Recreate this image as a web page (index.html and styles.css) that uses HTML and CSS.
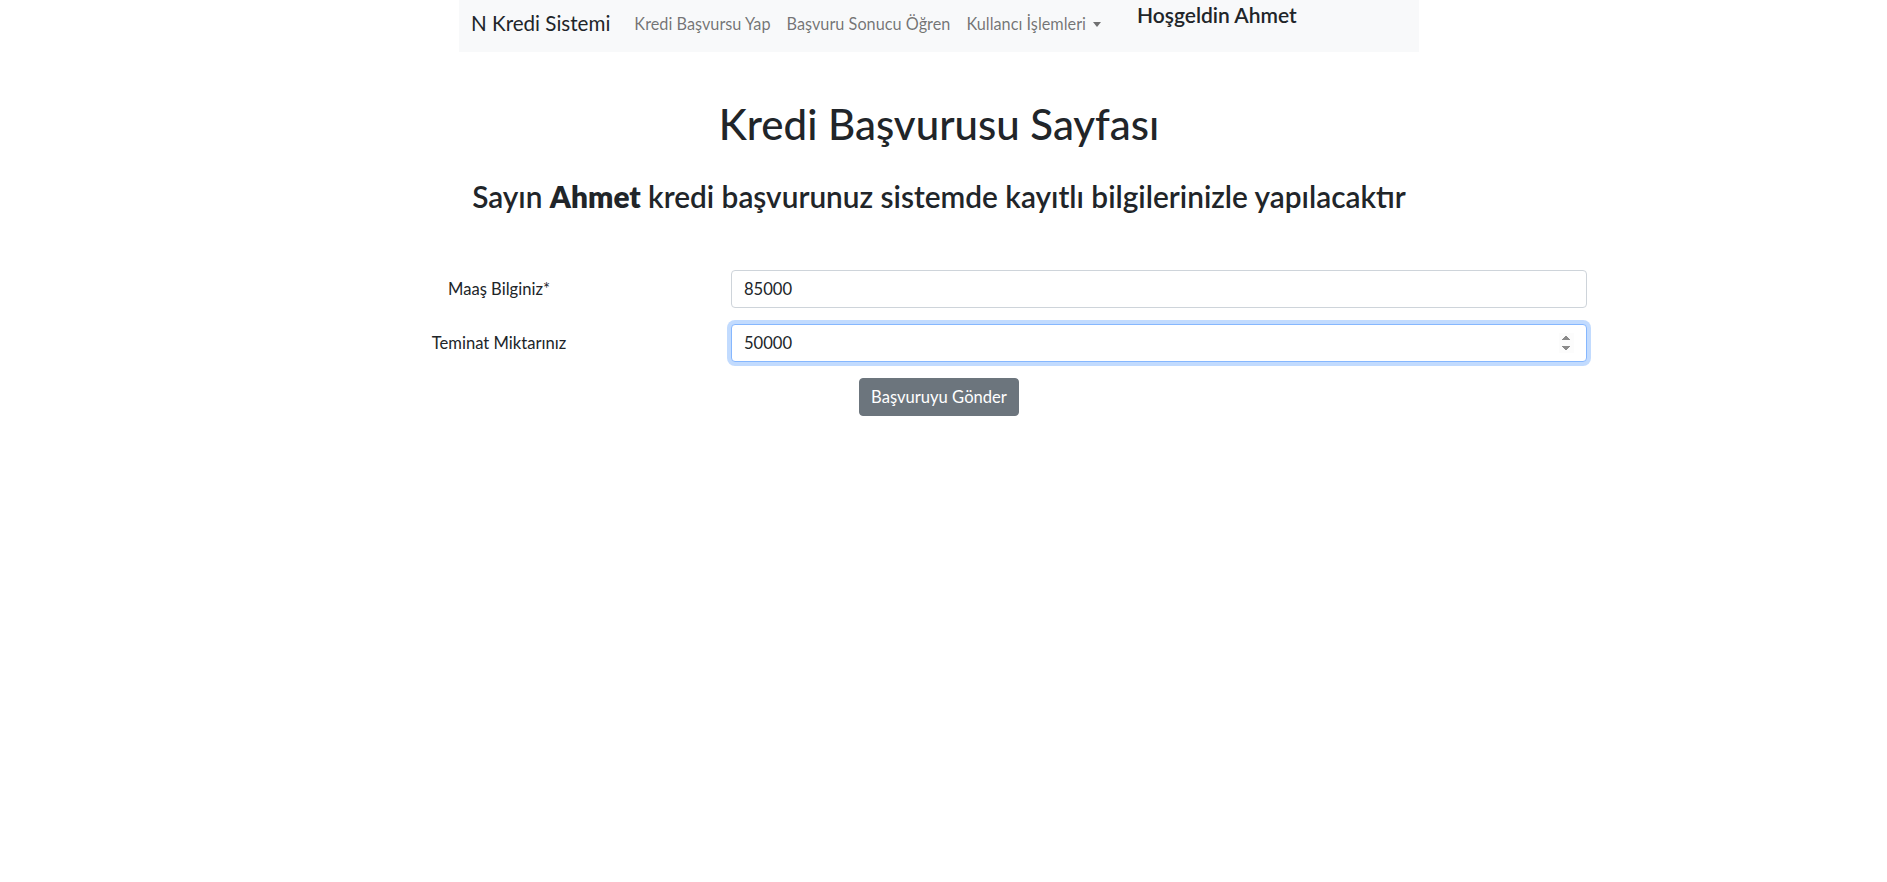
FILE: index.html
```html
<!DOCTYPE html>
<html lang="tr">
<head>
<meta charset="utf-8">
<title>Kredi Başvurusu Sayfası</title>
<link rel="stylesheet" href="styles.css">
</head>
<body>
<div class="page">
  <nav class="navbar">
    <a class="brand" href="#">N Kredi Sistemi</a>
    <ul class="nav">
      <li><a href="#">Kredi Başvursu Yap</a></li>
      <li><a href="#">Başvuru Sonucu Öğren</a></li>
      <li><a href="#" class="dropdown">Kullancı İşlemleri</a></li>
    </ul>
    <h5 class="welcome">Hoşgeldin Ahmet</h5>
  </nav>

  <main class="main">
    <h1 class="title">Kredi Başvurusu Sayfası</h1>
    <h3 class="subtitle">Sayın <b>Ahmet</b> kredi başvurunuz sistemde kayıtlı bilgilerinizle yapılacaktır</h3>

    <form class="form">
      <div class="row">
        <label class="label" for="maas">Maaş Bilginiz*</label>
        <input class="input" id="maas" type="text" value="85000">
      </div>
      <div class="row">
        <label class="label" for="teminat">Teminat Miktarınız</label>
        <input class="input focused" id="teminat" type="number" value="50000" autofocus>
      </div>
      <div class="actions">
        <button class="btn" type="button">Başvuruyu Gönder</button>
      </div>
    </form>
  </main>
</div>
</body>
</html>
```

FILE: styles.css
```css
* { box-sizing: border-box; }
html, body { margin: 0; padding: 0; background: #fff; }
body {
  font-family: "Lato", "Open Sans", sans-serif;
  color: #212529;
  font-size: 16.6px;
  line-height: 1.5;
}
.page { width: 1878px; }

.navbar {
  width: 960px;
  height: 52px;
  margin: 0 auto;
  background: #f8f9fa;
  display: flex;
  align-items: flex-start;
  padding: 0 12px;
}
.brand {
  font-size: 20.6px;
  color: #212529;
  text-decoration: none;
  line-height: 30px;
  padding-top: 8px;
  margin-right: 16px;
}
.nav {
  list-style: none;
  margin: 0;
  padding: 0;
  display: flex;
  padding-top: 12px;
}
.nav a {
  display: block;
  padding: 0 8px;
  font-size: 16.3px;
  line-height: 24px;
  color: rgba(0,0,0,.55);
  text-decoration: none;
}
.dropdown::after {
  content: "";
  display: inline-block;
  margin-left: 7px;
  vertical-align: 3px;
  border-top: 5px solid;
  border-left: 4px solid transparent;
  border-right: 4px solid transparent;
}
.welcome {
  margin: 0 0 0 28px;
  font-size: 21px;
  font-weight: 600;
  line-height: 24px;
  padding-top: 3px;
}

.main { text-align: center; }
.title {
  margin: 47px 0 0;
  font-size: 42px;
  font-weight: 500;
  line-height: 1.2;
}
.subtitle {
  margin: 30px 0 0;
  font-size: 29.8px;
  font-weight: 600;
  line-height: 1.2;
}
.subtitle b { font-weight: 800; }

.form {
  margin: 55px 0 0;
}
.row {
  display: grid;
  grid-template-columns: 198px 856px;
  column-gap: 133px;
  align-items: center;
  margin: 0 0 16px 400px;
  text-align: left;
}
.label { text-align: center; }
.input {
  height: 38px;
  width: 100%;
  padding: 6px 12px;
  font: inherit;
  color: #212529;
  background: #fff;
  border: 1px solid #ced4da;
  border-radius: 4px;
  outline: none;
}
.input.focused {
  border-color: #86b7fe;
  box-shadow: 0 0 0 4px rgba(13,110,253,.25);
}
.actions {
  display: flex;
  justify-content: center;
}
.btn {
  font: inherit;
  white-space: nowrap;
  color: #fff;
  background: #6c757d;
  border: 1px solid #6c757d;
  border-radius: 4px;
  height: 38px;
  padding: 0;
  width: 160px;
}
```
